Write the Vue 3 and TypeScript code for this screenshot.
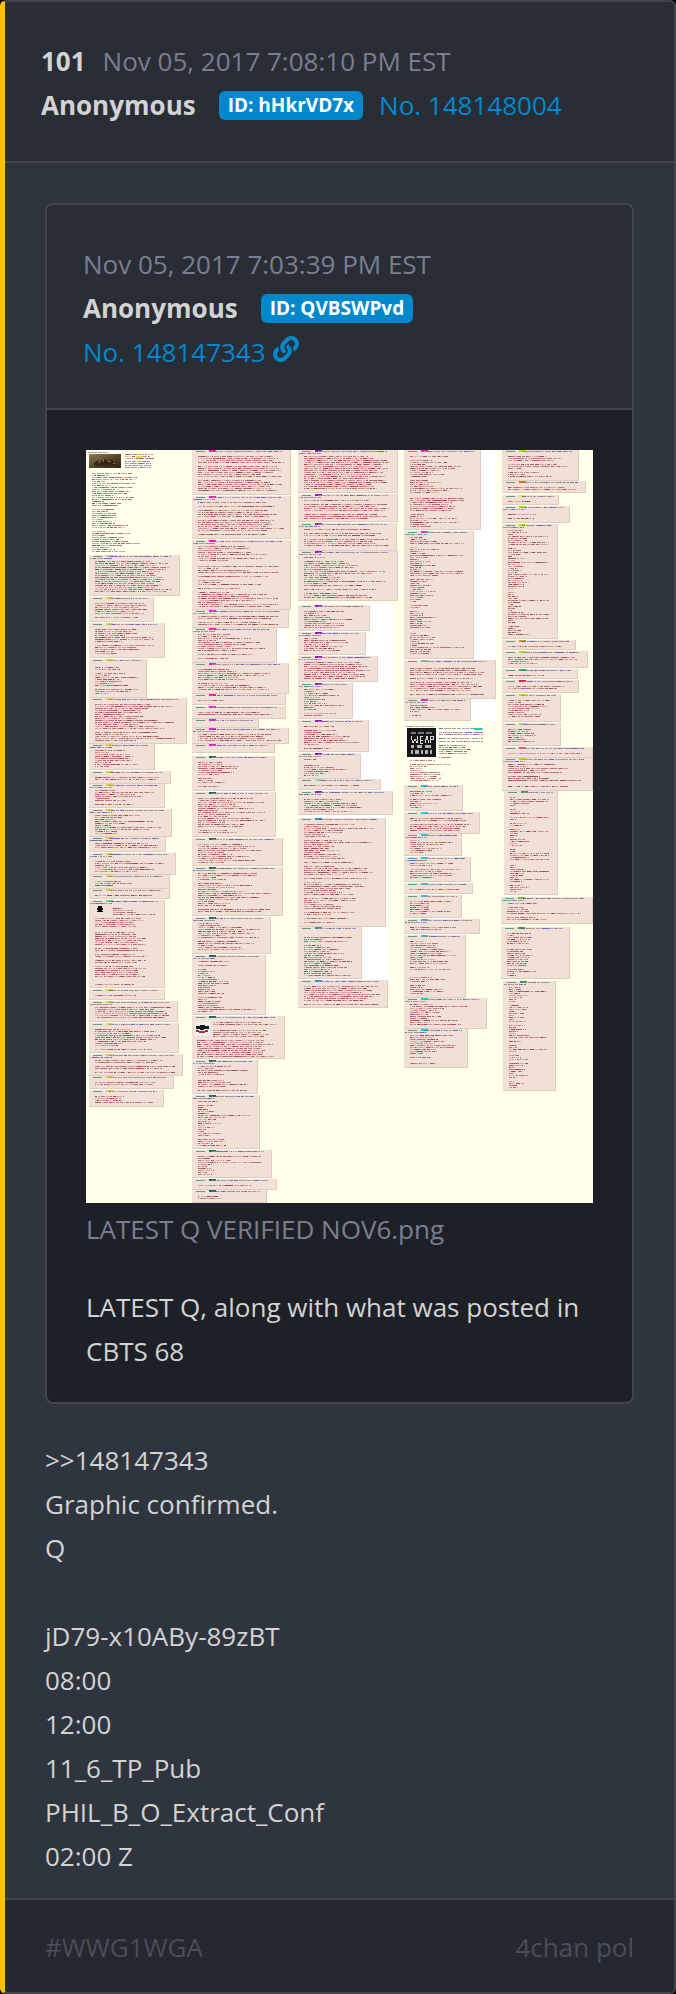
<script setup lang="ts">
type Post = [x: number, top: number, right: number, bottom: number, style?: 'p' | 'm' | 'l', tag?: string]

const postLines: string[] = [
  '>>148147343', 'Graphic confirmed.', 'Q', '', 'jD79-x10ABy-89zBT', '08:00', '12:00',
  '11_6_TP_Pub', 'PHIL_B_O_Extract_Conf', '02:00 Z',
]

const YELLOW = '#dccf3c'
const PINK = '#f21fc0'
const GREEN = '#1f6b4a'
const PURPLE = '#a012cc'
const BLUE = '#2a93bd'
const CYAN = '#08d4d6'
const LIME = '#a4e024'

function column(x: number, tag: string, rows: [number, number, number, ('p' | 'm' | 'l')?, string?, number?][]): Post[] {
  return rows.map(([right, top, bottom, style, own, left]) => [left ?? x, top, right, bottom, style ?? 'm', own ?? tag])
}

const posts: Post[] = [
  ...column(3, YELLOW, [
    [94, 105, 146, 'p'], [68, 147, 172, 'p'], [79, 173, 208], [61, 209, 248], [101, 248, 294], [69, 294, 320],
    [85, 321, 334, 'p'], [79, 334, 358], [86, 359, 387], [80, 387, 402, 'p'], [90, 403, 425], [84, 425, 439],
    [84, 439, 449, 'p'], [79, 450, 538, 'm', '#63df83'], [79, 539, 550], [92, 551, 572, 'p'], [93, 573, 603],
    [97, 604, 626, 'p'], [88, 626, 639, 'p'], [78, 640, 657],
  ]),
  ...column(106, PINK, [
    [205, 0, 45, 'p'], [205, 46, 89, 'p'], [205, 90, 160], [203, 160, 178, 'p'], [191, 178, 213], [203, 213, 244],
    [200, 244, 255], [200, 256, 269, 'p'], [173, 269, 278], [203, 278, 294, 'p'], [189, 294, 303, 'p'],
    [189, 306, 341, 'm', GREEN], [190, 342, 387, 'm', GREEN], [197, 388, 416, 'm', GREEN],
    [197, 417, 466, 'm', GREEN], [185, 467, 504, 'm', GREEN], [180, 505, 565, 'l', GREEN],
    [199, 566, 609, 'p', GREEN], [172, 610, 644, 'm', GREEN], [174, 645, 699, 'l', GREEN],
    [186, 700, 728, 'l', GREEN], [191, 729, 740, 'p', GREEN], [181, 740, 753, 'l', GREEN],
  ]),
  ...column(212, PURPLE, [
    [312, 0, 43, 'p'], [312, 44, 72, 'p'], [311, 73, 101, 'p'], [312, 101, 151], [284, 155, 181], [280, 182, 205],
    [292, 206, 232, 'p'], [267, 233, 269], [283, 270, 302], [275, 303, 329], [295, 329, 340, 'm', '#8be4cb'],
    [307, 341, 365], [300, 368, 477, 'm', BLUE], [276, 477, 529, 'm', BLUE], [302, 530, 558, 'p', BLUE],
  ]),
  ...column(318, CYAN, [
    [395, 0, 80, 'm', PINK], [388, 81, 209, 'l', PINK], [410, 210, 249, 'p', '#8ab9a3'], [385, 249, 271, 'l', PINK],
    [377, 335, 361], [394, 362, 384, 'p'], [376, 384, 406], [385, 407, 432], [387, 433, 444, 'p'], [376, 445, 468, 'l'],
    [394, 469, 484], [380, 485, 548], [401, 548, 579], [382, 579, 618],
  ]),
  ...column(416, LIME, [
    [493, 0, 31], [500, 31, 43, 'p', '#ef6a20'], [473, 45, 55, 'm', '#f2ee31'], [484, 56, 73, 'l'], [472, 74, 189, 'l'],
    [490, 190, 200, 'p', '#c6a11d'], [502, 201, 218, 'l'], [492, 219, 229, 'm', '#28b85c'], [493, 230, 243, 'p', '#f11d2c'],
    [475, 244, 272], [475, 273, 296], [507, 297, 308, 'p', '#f04a8c'], [507, 308, 341],
    [472, 341, 445, 'l', '#3c9f50', 418], [507, 447, 474, 'l', '#52cc3c', 415], [484, 477, 529, 'l', '#23ad32', 415],
    [470, 531, 641, 'l', '#36a53a', 417],
  ]),
]

let seed = 20171105
function rand(): number {
  seed = (seed * 1103515245 + 12345) % 2147483648
  return seed / 2147483648
}

const inkColours = ['#b4606e', '#9c4858', '#cf8c80', '#c391a0', '#a9586f', '#7f2f40', '#d3a48c']
const inks: string[] = inkColours.map(() => '')
const headInks = ['#5c58b0', '#8e90c4', '#b9858e', '#9d7f8e']
const heads: string[] = headInks.map(() => '')

function write(target: string[], x: number, y: number, width: number): void {
  let at = x
  while (at < x + width) {
    const word = Math.min(1 + Math.floor(rand() * 4), Math.max(1, Math.round(x + width - at)))
    const index = Math.floor(rand() * target.length)
    target[index] += `M${Math.round(at)} ${y}h${word}v1h-${word}z`
    at += word + (rand() < 0.45 ? 1 : 0)
  }
}

function paragraph(x: number, top: number, bottom: number, width: number, style: string): void {
  const [low, high] = style === 'p' ? [0.72, 0.98] : style === 'l' ? [0.1, 0.5] : [0.2, 0.85]
  for (let y = top; y < bottom; y += 2) {
    if (rand() < 0.12) continue
    const share = style !== 'p' && rand() < 0.12 ? 0.92 : low + rand() * (high - low)
    write(inks, x, y, Math.max(4, width * share))
  }
}

for (const [x, top, right, bottom, style] of posts) {
  write(heads, x + 20, top + 1, (right - x) * 0.9 - 20)
  if (rand() < 0.5 && bottom - top > 14) write(heads, x + 1, top + 3, 22)
  if (top === 450) {
    paragraph(x + 24, top + 8, top + 15, 45, 'm')
    paragraph(x + 6, top + 16, bottom - 3, 52, 'p')
  } else if (top === 566) {
    paragraph(x + 21, top + 6, top + 22, 66, 'p')
    paragraph(x + 5, top + 24, bottom - 1, 82, 'p')
  } else {
    paragraph(x + 6, top + 6, bottom - 3, right - x - 12, style ?? 'm')
  }
}
write(heads, 2, 2, 22)
paragraph(39, 4, 9, 30, 'p')
for (const y of [11, 13, 15, 17]) write(heads, 39, y, 26)
paragraph(6, 21, 103, 52, 'm')
write(heads, 320, 276, 28)
for (const y of [278, 282, 284, 288, 291]) write(heads, 353, y, 44)
paragraph(353, 295, 308, 34, 'm')
paragraph(324, 310, 331, 48, 'm')
</script>

<template>
  <article class="card">
    <header class="card-head">
      <div class="line"><strong class="number">101</strong><time class="muted">Nov 05, 2017 7:08:10 PM EST</time></div>
      <div class="line">
        <strong class="name">Anonymous</strong><span class="badge">ID: hHkrVD7x</span><a class="link" href="#148148004">No. 148148004</a>
      </div>
    </header>

    <div class="card-body">
      <section class="quote">
        <header class="quote-head">
          <div class="line"><time class="muted">Nov 05, 2017 7:03:39 PM EST</time></div>
          <div class="line"><strong class="name">Anonymous</strong><span class="badge">ID: QVBSWPvd</span></div>
          <div class="line">
            <a class="link" href="#148147343">No. 148147343</a>
            <a class="icon-link" href="#source" aria-label="Source">
              <svg class="chain" viewBox="0 0 512 512" aria-hidden="true">
                <path fill="currentColor" d="M326.612 185.391c59.747 59.809 58.927 155.698.36 214.59-.11.12-.24.25-.36.37l-67.2 67.2c-59.27 59.27-155.699 59.262-214.96 0-59.27-59.26-59.27-155.7 0-214.96l37.106-37.106c9.84-9.84 26.786-3.3 27.294 10.606.648 17.722 3.826 35.527 9.69 52.721 1.986 5.822.567 12.262-3.783 16.612l-13.087 13.087c-28.026 28.026-28.905 73.66-1.155 101.96 28.024 28.579 74.086 28.749 102.325.51l67.2-67.19c28.191-28.191 28.073-73.757 0-101.83-3.701-3.694-7.429-6.564-10.341-8.569a16.037 16.037 0 0 1-6.947-12.606c-.396-10.567 3.348-21.456 11.698-29.806l21.054-21.055c5.521-5.521 14.182-6.199 20.584-1.731a152.482 152.482 0 0 1 20.522 17.197zM467.547 44.449c-59.261-59.262-155.69-59.27-214.96 0l-67.2 67.2c-.12.12-.25.25-.36.37-58.566 58.892-59.387 154.781.36 214.59a152.454 152.454 0 0 0 20.521 17.196c6.402 4.468 15.064 3.789 20.584-1.731l21.054-21.055c8.35-8.35 12.094-19.239 11.698-29.806a16.037 16.037 0 0 0-6.947-12.606c-2.912-2.005-6.64-4.875-10.341-8.569-28.073-28.073-28.191-73.639 0-101.83l67.2-67.19c28.239-28.239 74.3-28.069 102.325.51 27.75 28.3 26.872 73.934-1.155 101.96l-13.087 13.087c-4.35 4.35-5.769 10.79-3.783 16.612 5.864 17.194 9.042 34.999 9.69 52.721.509 13.906 17.454 20.446 27.294 10.606l37.106-37.106c59.271-59.259 59.271-155.699.001-214.959z" />
              </svg>
            </a>
          </div>
        </header>
        <div class="quote-body">
          <figure class="figure">
            <svg class="graphic" viewBox="0 0 507 753" role="img" aria-label="LATEST Q VERIFIED NOV6.png">
              <defs>
                <linearGradient id="scene" x1="0" y1="0" x2="1" y2="1">
                  <stop offset="0" stop-color="#8a7c50" />
                  <stop offset=".5" stop-color="#5a482e" />
                  <stop offset="1" stop-color="#2e2418" />
                </linearGradient>
              </defs>
              <rect width="507" height="753" fill="#ffffec" />
              <g fill="#fff">
                <rect x="106" y="178" width="97" height="35" />
                <rect x="212" y="155" width="95" height="210" />
                <rect x="212" y="365" width="90" height="165" />
                <rect x="318" y="0" width="92" height="271" />
              </g>
              <g v-for="(p, i) in posts" :key="i">
                <rect :x="p[0]" :y="p[1]" :width="p[2] - p[0]" :height="p[3] - p[1]" fill="#e0cdc2" />
                <rect :x="p[0]" :y="p[1]" :width="p[2] - p[0] - 1" :height="p[3] - p[1] - 1" fill="#f0e0d6" />
                <rect :x="p[0] + 4" :y="p[1] + 1" width="9" height="1" fill="#5f9f83" />
                <rect :x="p[0] + 17" :y="p[1]" width="7" height="2" :fill="p[5]" />
              </g>
              <path v-for="(d, i) in inks" :key="`i${i}`" :d="d" :fill="inkColours[i]" opacity=".8" />
              <path v-for="(d, i) in heads" :key="`h${i}`" :d="d" :fill="headInks[i]" opacity=".85" />

              <rect x="3" y="4" width="32" height="14" fill="url(#scene)" />
              <path d="M7 14l4-3 4 1 3-4 2 3 5-1 6 4-4 2H10z" fill="#33271b" />
              <path d="M12 12h2v1h-2zM17 9h1v3h-1zM22 11h3v1h-3zM27 13h2v1h-2z" fill="#b05b35" />
              <rect x="50" y="6" width="7" height="2" fill="#e5df3c" />

              <path d="M12 456h4v2h1v2h-1v1h1v1h-6v-1h1v-1h-1v-2h1z" fill="#080808" />

              <rect x="109" y="572" width="15" height="14" fill="#eef0f6" />
              <path d="M110 576h4v-1h5v1h4v3h-5v1h-4v-1h-4z" fill="#15151c" />
              <path d="M110 580h3v1h6v-1h3v2h-3v1h-6v-1h-3z" fill="#b52b2b" />

              <rect x="321" y="278" width="29" height="29" fill="#17171a" />
              <path d="M325 282h5v2h-5zM332 282h6v2h-6zM340 282h6v2h-6z" fill="#77777b" />
              <path d="M325 286l2 7 2-4 2 4 1-7M334 286h3m-3 0v7h3m-3-3h3M339 293l2-7 2 7M344 293v-7h3v3h-3" fill="none" stroke="#d6d6d6" />
              <path d="M325 295v3h3v-3zM331 295v3h5v-3zM339 295v3h6v-3zM325 300h2v4h-2zM329 300h4v4h-4zM335 300h2v4h-2zM339 300h3v4h-3zM344 300h2v4h-2z" fill="#b4b4b4" />
              <rect x="388" y="278" width="8" height="2" fill="#08d4d6" />
            </svg>
            <figcaption class="caption">LATEST Q VERIFIED NOV6.png</figcaption>
          </figure>
          <p class="text">LATEST Q, along with what was posted in CBTS 68</p>
        </div>
      </section>

      <div class="message">
        <p v-for="(line, i) in postLines" :key="i" class="row">{{ line }}</p>
      </div>
    </div>

    <footer class="card-foot"><span>#WWG1WGA</span><span>4chan pol</span></footer>
  </article>
</template>

<style>
body {
  margin: 0;
  background: #000;
}
</style>

<style scoped>
.card {
  box-sizing: border-box;
  border: 2px solid #41454f;
  border-left: 5px solid #ffc107;
  border-radius: 6px;
  overflow: hidden;
  background: #2f353f;
  color: #d3d3d3;
  font-family: "Open Sans", "Noto Sans", sans-serif;
  font-size: 26px;
  line-height: 44px;
}
.card-head,
.quote-head {
  padding: 37px 36px 34px;
  background: #292d36;
  border-bottom: 2px solid #41454f;
}
.line {
  display: flex;
  align-items: center;
  flex-wrap: wrap;
  min-height: 44px;
}
.number {
  margin-right: 17px;
}
.name {
  margin-right: 23px;
}
.muted {
  color: #7b7e90;
}
.badge {
  padding: 0 9px;
  margin-right: 16px;
  border-radius: 6px;
  background: #0088cc;
  color: #fff;
  font-size: 19px;
  font-weight: 700;
  line-height: 29px;
}
.link,
.icon-link {
  color: #0088cc;
  text-decoration: none;
}
.icon-link {
  display: flex;
  margin-left: 7px;
}
.chain {
  width: 26px;
  height: 26px;
  margin-bottom: 6px;
}
.card-body {
  padding: 40px 40px 20px;
}
.quote {
  border: 2px solid #41454f;
  border-radius: 8px;
  overflow: hidden;
  background: #1e2027;
}
.quote-body {
  padding: 40px 39px 29px;
}
.figure {
  margin: 0 0 34px;
}
.graphic {
  display: block;
  width: 100%;
  height: auto;
  shape-rendering: crispEdges;
}
.caption {
  margin-top: 4px;
  color: #7b7e90;
}
.text,
.row {
  margin: 0;
}
.message {
  margin-top: 34px;
}
.row {
  min-height: 44px;
}
.card-foot {
  display: flex;
  justify-content: space-between;
  padding: 25px 40px 23px;
  border-top: 2px solid #41454f;
  background: #242831;
  color: #4b4d5a;
}
</style>
